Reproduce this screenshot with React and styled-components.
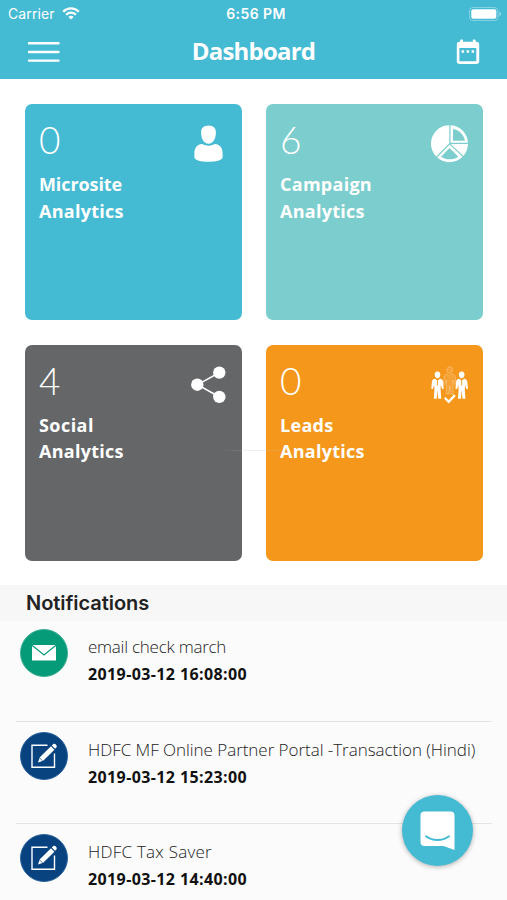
import styled, { createGlobalStyle } from "styled-components";

const App = () => (
  <Screen>
    <GlobalStyle />
    <Header>
      <StatusBar>
        <Carrier>
          <span>Carrier</span>
          <WifiIcon />
        </Carrier>
        <Time>6:56 PM</Time>
        <BatteryIcon />
      </StatusBar>
      <NavBar>
        <MenuIcon />
        <Title>Dashboard</Title>
        <CalendarIcon />
      </NavBar>
    </Header>
    <Cards>
      {cards.map(({ name, count, color, Icon, spacing }) => (
        <Card key={name} $color={color}>
          <CardTop>
            <Count>{count}</Count>
            <Icon />
          </CardTop>
          <CardName $spacing={spacing}>{name}</CardName>
          <CardName $spacing="0.27px">Analytics</CardName>
        </Card>
      ))}
      <Streak />
    </Cards>
    <Notifications>
      <SectionTitle>Notifications</SectionTitle>
      {notifications.map(({ text, date, type, spacing }) => (
        <Row key={date}>
          <Badge $type={type}>
            {type === "email" ? <MailIcon /> : <EditIcon />}
          </Badge>
          <Info>
            <Message $spacing={spacing}>{text}</Message>
            <DateText>{date}</DateText>
          </Info>
        </Row>
      ))}
    </Notifications>
    <ChatButton aria-label="Chat">
      <ChatIcon />
    </ChatButton>
  </Screen>
);

const WifiIcon = () => (
  <svg width="18" height="13" viewBox="0 0 18 13" fill="none" stroke="#fff" strokeWidth="2.2">
    <path d="M1.2 4.7C5.5.3 12.5.3 16.8 4.7" />
    <path d="M4.1 7.7c2.8-2.7 7-2.7 9.8 0" />
    <path d="M6.4 9.9c1.5-1.4 3.7-1.4 5.2 0L9 12.6z" fill="#fff" stroke="none" />
  </svg>
);

const BatteryIcon = () => (
  <svg width="33" height="14" viewBox="0 0 33 14">
    <rect x=".5" y=".5" width="28.5" height="13" rx="3.5" fill="none" stroke="#fff" strokeOpacity=".35" />
    <rect x="2.3" y="2.3" width="25" height="9.4" rx="2" fill="#fff" />
    <path d="M30.5 4.8c1.9.5 1.9 3.9 0 4.4z" fill="#fff" fillOpacity=".5" />
  </svg>
);

const MenuIcon = () => (
  <svg width="33" height="22" viewBox="0 0 33 22" stroke="#fff" strokeWidth="2.4" strokeLinecap="round">
    <path d="M2 2.3h29.5M2 11h29.5M2 19.6h29.5" />
  </svg>
);

const CalendarIcon = () => (
  <svg width="24" height="26" viewBox="0 0 24 26">
    <path
      fill="#fff"
      fillRule="evenodd"
      d="M4.2 1.2Q4.2.5 5 .5h1.2q.8 0 .8.7v1.6h9.8V1.2q0-.7.8-.7h1.2q.8 0 .8.7v1.6h.7q2.9 0 2.9 2.7v16.8q0 2.7-2.9 2.7H3.7Q.8 25 .8 22.3V5.5q0-2.7 2.9-2.7h.5zM3.4 8.9v13.4h16.9V8.9z"
    />
    <path fill="#fff" d="M5.6 11.3h2.5v2.5H5.6zM10.6 11.3h2.5v2.5h-2.5zM15.6 11.3h2.5v2.5h-2.5z" />
  </svg>
);

const UserIcon = () => (
  <svg width="38" height="38" viewBox="0 0 38 38" fill="#fff">
    <path d="M18.5.4c5.2 0 7.5 3 7.4 7.2 0 6-2.600 11.200-7.400 11.200S11.100 13.600 11.100 7.600C11 3.400 13.300.4 18.500.4z" />
    <path d="M12.300 19c3.800 2.200 8.600 2.200 12.400 0 5.200.3 7.900 4.100 7.900 9.200v4c0 6.200-28.200 6.200-28.200 0v-4c0-5.100 2.700-8.900 7.900-9.200z" />
  </svg>
);

const PieIcon = () => (
  <svg width="38" height="38" viewBox="0 0 38 38">
    <circle cx="18.5" cy="18.7" r="18.5" fill="#fff" />
    <path d="M18.9 0v18.3H38M5.6 32.2l12.9-13.3 13.8 12.7" fill="none" stroke="#7ccdcd" strokeWidth="1.2" />
    <path fill="#7ccdcd" d="M22 4.1c6.1 1 10.7 5.3 11.9 11.6H22zM18.5 22.9l8.9 8.8c-5.5 3.5-12.3 3.5-17.4.1z" />
  </svg>
);

const ShareIcon = () => (
  <svg width="38" height="38" viewBox="0 0 38 38">
    <path d="M29.5 6.5 7.6 18.7l21.9 12.3" fill="none" stroke="#fff" strokeWidth="1.5" />
    <g fill="#fff">
      <circle cx="7.3" cy="18.7" r="6.2" />
      <circle cx="29.3" cy="6.6" r="6.2" />
      <circle cx="29.3" cy="30.9" r="6.2" />
    </g>
  </svg>
);

const person =
  "M6.5 0c2 0 3 1.4 2.8 3.3C9.2 5.2 8.2 6.7 6.5 6.7S3.8 5.2 3.7 3.3C3.5 1.4 4.5 0 6.5 0zM4 7.2l2.5 2 2.5-2c2 .2 2.9 1.2 3.1 3.2l.7 6.8-1.7.4-1.3-4.3-.2 5 .6 9H7.3L6.5 19l-.8 8.3H2.8l.6-9-.2-5-1.3 4.3-1.7-.4.7-6.8C1.1 8.4 2 7.4 4 7.2z";

const LeadsIcon = () => (
  <svg width="38" height="38" viewBox="0 0 38 38">
    <g fill="#fff">
      <path transform="translate(0 5.5)" d={person} />
      <path transform="translate(24.2 5.5)" d={person} />
    </g>
    <path
      transform="translate(12.2 .8)"
      d={person}
      fill="#fff"
      fillOpacity=".12"
      stroke="#fff"
      strokeOpacity=".5"
      strokeWidth=".8"
      strokeDasharray="1 .6"
    />
    <path d="M13.8 31.8l3.9 4 6.2-6.7" fill="none" stroke="#fff" strokeWidth="2.3" />
    <path d="M6.5 14.5v5M30.7 14.5v5" stroke="#f4971b" strokeWidth=".9" />
  </svg>
);

const MailIcon = () => (
  <svg width="26" height="18" viewBox="0 0 26 18">
    <rect x="1" y="1" width="24" height="15.5" fill="#fff" />
    <path d="M1 1.2 13 11 25 1.2" fill="none" stroke="#069b78" strokeWidth="1.2" />
  </svg>
);

const EditIcon = () => (
  <svg width="28" height="26" viewBox="0 0 28 26">
    <path d="M17.5 2.3H2v22h22.5V10.5" fill="none" stroke="#fff" strokeWidth="1.4" />
    <path fill="#fff" d="m9.8 14.2 11.2-11 3.4 3.5-11.2 11L8 19.4zM21.8 2.4l1.5-1.4c1.5-1.2 4.4 1.6 3.2 3.3l-1.4 1.5z" />
    <path d="m9.5 14.8 3.1 3.1" stroke="#08427f" strokeWidth=".7" />
  </svg>
);

const ChatIcon = () => (
  <svg width="36" height="40" viewBox="0 0 36 40">
    <path fill="#fff" d="M4.5.5h26q4 0 4 4V39l-11-4h-19q-4 0-4-4V4.500q0-4 4-4z" />
    <path d="M6 25.3c6.700 5 16.300 5 23 0" fill="none" stroke="#45bad3" strokeWidth="1.9" strokeLinecap="round" />
  </svg>
);

const cards = [
  { name: "Microsite", count: 0, color: "#45bad3", Icon: UserIcon, spacing: "-0.1px" },
  { name: "Campaign", count: 6, color: "#7ccdcd", Icon: PieIcon, spacing: "0.27px" },
  { name: "Social", count: 4, color: "#646668", Icon: ShareIcon, spacing: "0.45px" },
  { name: "Leads", count: 0, color: "#f4971b", Icon: LeadsIcon, spacing: "0.3px" },
];

const notifications = [
  { text: "email check march", date: "2019-03-12 16:08:00", type: "email", spacing: "-0.25px" },
  {
    text: "HDFC MF Online Partner Portal -Transaction (Hindi)",
    date: "2019-03-12 15:23:00",
    type: "edit",
    spacing: "-0.04px",
  },
  { text: "HDFC Tax Saver", date: "2019-03-12 14:40:00", type: "edit", spacing: "0.24px" },
];

const GlobalStyle = createGlobalStyle`
  * {
    box-sizing: border-box;
  }

  body {
    margin: 0;
    background: #fff;
    font-family: "Open Sans", "Noto Sans", sans-serif;
  }

  svg {
    display: block;
    flex-shrink: 0;
  }
`;

const Screen = styled.div`
  position: relative;
  width: 507px;
  height: 900px;
  overflow: hidden;
`;

const Header = styled.header`
  height: 79px;
  background: #45bad3;
  color: #fff;
`;

const StatusBar = styled.div`
  display: grid;
  grid-template-columns: 1fr auto 1fr;
  align-items: center;
  height: 27px;
  padding: 0 5px 0 8px;
  font-family: Inter, sans-serif;

  > svg {
    justify-self: end;
  }
`;

const Carrier = styled.div`
  display: flex;
  align-items: center;
  gap: 7px;
  font-size: 14px;
  font-weight: 400;
  letter-spacing: 0.1px;
`;

const Time = styled.div`
  padding-left: 2px;
  font-size: 14px;
  font-weight: 600;
  letter-spacing: 0.4px;
`;

const NavBar = styled.div`
  display: grid;
  grid-template-columns: 1fr auto 1fr;
  align-items: center;
  height: 50px;
  padding: 0 27px;

  > svg:last-child {
    justify-self: end;
  }
`;

const Title = styled.h1`
  margin: 0;
  padding-bottom: 2px;
  font-size: 24px;
  font-weight: 700;
  line-height: 30px;
  letter-spacing: -0.8px;
`;

const Cards = styled.main`
  position: relative;
  display: grid;
  grid-template-columns: 217px 217px;
  grid-auto-rows: 216px;
  gap: 24.5px 24px;
  height: 506px;
  padding: 25px 25px 0;
`;

const Card = styled.section`
  padding: 21px 14px;
  border-radius: 7px;
  background: ${props => props.$color};
  color: #fff;
`;

const CardTop = styled.div`
  display: flex;
  justify-content: space-between;
  height: 46px;
`;

const Count = styled.div`
  font-family: Lato, sans-serif;
  font-size: 37px;
  font-weight: 300;
  line-height: 29px;
`;

const CardName = styled.div`
  font-size: 18px;
  font-weight: 700;
  line-height: 26.6px;
  letter-spacing: ${props => props.$spacing};
`;

const Streak = styled.div`
  position: absolute;
  top: 371px;
  left: 223px;
  width: 68px;
  height: 1px;
  background: linear-gradient(90deg, transparent, rgba(200, 200, 200, 0.35), transparent);
`;

const Notifications = styled.section`
  height: 315px;
  background: #fbfbfb;
`;

const SectionTitle = styled.h2`
  height: 36px;
  margin: 0;
  padding-left: 26px;
  background: #f7f7f7;
  color: #222;
  font-family: Inter, sans-serif;
  font-size: 20px;
  font-weight: 600;
  line-height: 36px;
  letter-spacing: -0.05px;
`;

const Row = styled.div`
  display: flex;
  gap: 20px;
  height: 99.6px;
  margin: 0 15px 0 16px;
  padding: 8px 0 0 4px;

  & + & {
    height: 102.8px;
    padding-top: 10px;
    border-top: 1px solid #e4e4e4;
  }
`;

const Badge = styled.div`
  display: flex;
  align-items: center;
  justify-content: center;
  width: 48px;
  height: 48px;
  border: 1.5px solid ${props => (props.$type === "email" ? "#3aaf93" : "#2c65a0")};
  border-radius: 50%;
  background: ${props => (props.$type === "email" ? "#069b78" : "#08427f")};
`;

const Info = styled.div`
  padding-top: 4px;
  white-space: nowrap;
`;

const Message = styled.div`
  color: #222;
  font-size: 17px;
  font-weight: 330;
  line-height: 27px;
  letter-spacing: ${props => props.$spacing};
`;

const DateText = styled.div`
  color: #111;
  font-size: 16px;
  font-weight: 700;
  line-height: 28px;
  letter-spacing: 0.39px;
`;

const ChatButton = styled.button`
  position: absolute;
  right: 34px;
  bottom: 34px;
  display: flex;
  align-items: center;
  justify-content: center;
  width: 71px;
  height: 71px;
  padding: 0;
  border: 0;
  border-radius: 50%;
  background: #45bad3;
  box-shadow: 0 1px 5px rgba(0, 0, 0, 0.3);
`;

export default App;
